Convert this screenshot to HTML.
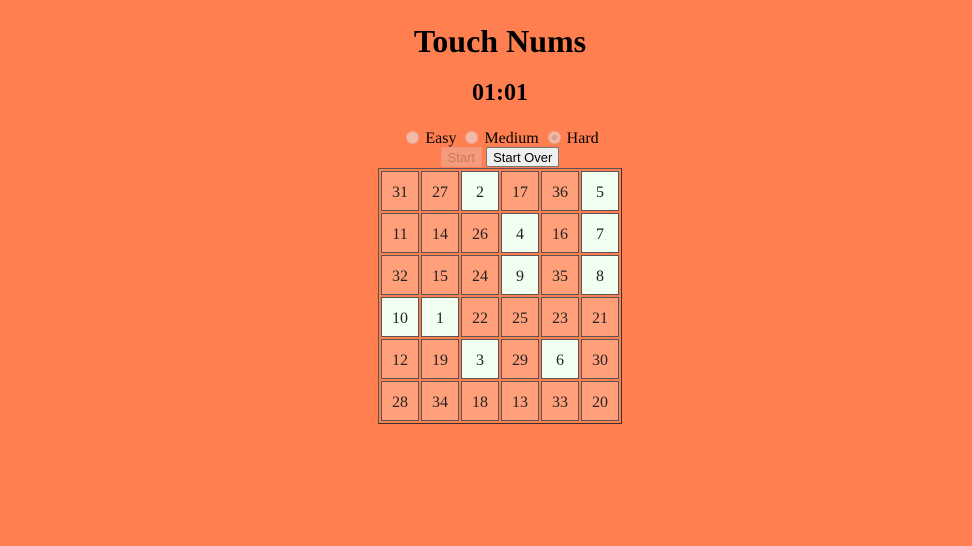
<!DOCTYPE html>
<html><head><style>
body{margin:0;background:#ff7f50;width:972px;height:546px;position:relative;font-family:"Liberation Serif",serif;overflow:hidden}
.c{position:absolute;left:0;width:1000px;text-align:center}
h1{margin:0;font-size:32px;font-weight:bold}
h2{margin:0;font-size:24px;font-weight:bold}
.r{display:inline-block;width:13px;height:13px;border-radius:50%;background:#f4b9a6;border:1px solid #e9a890;vertical-align:-1px;margin:0 6px 0 5px;box-sizing:border-box}
.r.s{background:radial-gradient(#d9a08c 35%,#f4b9a6 40%)}
button{font-family:"Liberation Sans",sans-serif;font-size:13px;padding:1px 6px;height:20px;border:1px solid #767676;border-radius:2px;background:#efefef;color:#000}
button.d{background:#f59a7b;border-color:#f29578;color:#c97a62}
.t{position:absolute;left:378px;top:168px;width:242px;height:254px;border:1px solid #555;border-right-color:#333;border-bottom-color:#333}
.t div{position:absolute;width:36px;height:38px;border:1px solid #555;background:#ffa07a;text-align:center;line-height:42px;font-size:16px;color:#222}
.t div.w{background:#f0fff0}
</style></head><body>
<div class="c" style="top:23px"><h1>Touch Nums</h1></div>
<div class="c" style="top:80px"><h2>01:01</h2></div>
<div class="c" style="top:130px;font-size:16px"><span class="r"></span>Easy <span class="r"></span>Medium <span class="r s"></span>Hard</div>
<div class="c" style="top:147px"><button class="d">Start</button> <button>Start Over</button></div>
<div class="t" id="t"></div>
<script>
var n=[[31,27,2,17,36,5],[11,14,26,4,16,7],[32,15,24,9,35,8],[10,1,22,25,23,21],[12,19,3,29,6,30],[28,34,18,13,33,20]];
var t=document.getElementById('t'),h='';
for(var r=0;r<6;r++)for(var c=0;c<6;c++){var v=n[r][c];h+='<div class="'+(v<=10?'w':'')+'" style="left:'+(2+c*40)+'px;top:'+(2+r*42)+'px">'+v+'</div>';}
t.innerHTML=h;
</script>
</body></html>
